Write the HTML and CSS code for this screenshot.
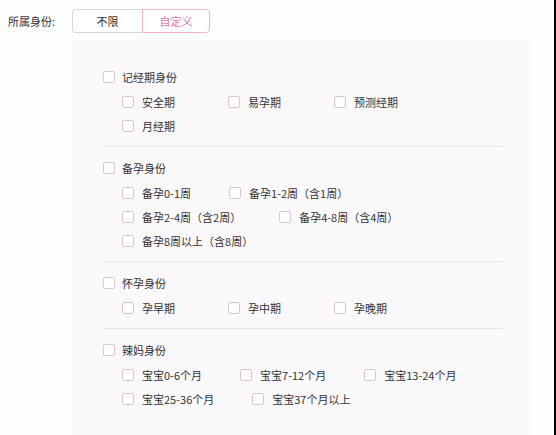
FILE: index.html
```html
<!DOCTYPE html>
<html lang="zh-CN">
<head>
<meta charset="utf-8">
<title>所属身份</title>
<link rel="stylesheet" href="styles.css">
</head>
<body>
<div class="page">
  <div class="content">
    <div class="field-row">
      <span class="field-label">所属身份:</span>
      <div class="segmented">
        <span class="seg">不限</span>
        <span class="seg seg-active">自定义</span>
      </div>
    </div>
    <div class="panel">
      <div class="group">
        <div class="group-head"><span class="box"></span><span class="text">记经期身份</span></div>
        <div class="sub-row">
          <label class="item"><span class="box"></span><span class="text">安全期</span></label>
          <label class="item"><span class="box"></span><span class="text">易孕期</span></label>
          <label class="item"><span class="box"></span><span class="text">预测经期</span></label>
        </div>
        <div class="sub-row">
          <label class="item"><span class="box"></span><span class="text">月经期</span></label>
        </div>
      </div>
      <div class="group">
        <div class="group-head"><span class="box"></span><span class="text">备孕身份</span></div>
        <div class="sub-row">
          <label class="item"><span class="box"></span><span class="text">备孕0-1周</span></label>
          <label class="item"><span class="box"></span><span class="text">备孕1-2周（含1周）</span></label>
        </div>
        <div class="sub-row">
          <label class="item"><span class="box"></span><span class="text">备孕2-4周（含2周）</span></label>
          <label class="item"><span class="box"></span><span class="text">备孕4-8周（含4周）</span></label>
        </div>
        <div class="sub-row">
          <label class="item"><span class="box"></span><span class="text">备孕8周以上（含8周）</span></label>
        </div>
      </div>
      <div class="group">
        <div class="group-head"><span class="box"></span><span class="text">怀孕身份</span></div>
        <div class="sub-row">
          <label class="item"><span class="box"></span><span class="text">孕早期</span></label>
          <label class="item"><span class="box"></span><span class="text">孕中期</span></label>
          <label class="item"><span class="box"></span><span class="text">孕晚期</span></label>
        </div>
      </div>
      <div class="group group-last">
        <div class="group-head"><span class="box"></span><span class="text">辣妈身份</span></div>
        <div class="sub-row">
          <label class="item"><span class="box"></span><span class="text">宝宝0-6个月</span></label>
          <label class="item"><span class="box"></span><span class="text">宝宝7-12个月</span></label>
          <label class="item"><span class="box"></span><span class="text">宝宝13-24个月</span></label>
        </div>
        <div class="sub-row">
          <label class="item"><span class="box"></span><span class="text">宝宝25-36个月</span></label>
          <label class="item"><span class="box"></span><span class="text">宝宝37个月以上</span></label>
        </div>
      </div>
    </div>
  </div>
  <div class="edge"></div>
</div>
</body>
</html>
```

FILE: styles.css
```css
* { box-sizing: border-box; }

html, body {
  margin: 0;
  padding: 0;
  background: #fdfefe;
}

body {
  font-family: "Noto Sans CJK SC", "Noto Sans", sans-serif;
  font-size: 11px;
  color: #333;
}

.page {
  display: flex;
  width: 556px;
  height: 435px;
  overflow: hidden;
}

.content {
  flex: 1;
  display: flex;
  flex-direction: column;
}

.edge {
  width: 2px;
  background: #000;
}

.field-row {
  display: flex;
  align-items: center;
  padding-top: 9px;
}

.field-label {
  width: 72px;
  padding-left: 8px;
  color: #333;
  line-height: 24px;
}

.segmented {
  display: flex;
}

.seg {
  height: 24px;
  line-height: 22px;
  text-align: center;
  border: 1px solid #d9d9d9;
  background: #fff;
  color: #333;
}

.seg:first-child {
  width: 70px;
  border-radius: 4px 0 0 4px;
  border-right: none;
}

.seg-active {
  width: 68px;
  color: #e2789f;
  border-color: #eeb4c8;
  border-radius: 0 4px 4px 0;
}

.panel {
  flex: 1;
  margin-top: 7px;
  margin-left: 72px;
  width: 457px;
  background: #fbf9fc;
  padding: 16px 26px 0 30px;
}

.group {
  padding: 9px 0 8px;
  border-bottom: 1px solid #e9e6ea;
}

.group-last {
  border-bottom: none;
}

.group-head {
  display: flex;
  align-items: center;
  height: 24px;
  margin-bottom: 1px;
  padding-left: 1px;
}

.group-head .text {
  margin-left: 7px;
}

.sub-row {
  display: flex;
  align-items: center;
  height: 24px;
  padding-left: 20px;
}

.item {
  display: flex;
  align-items: center;
  margin-right: 38px;
}

.item .text {
  margin-left: 8px;
  min-width: 48px;
}

.box {
  width: 12px;
  height: 12px;
  border: 1px solid #dcc6cf;
  border-radius: 2px;
  background: #fff;
  flex: none;
}

.text {
  white-space: nowrap;
  line-height: 16px;
}
```
